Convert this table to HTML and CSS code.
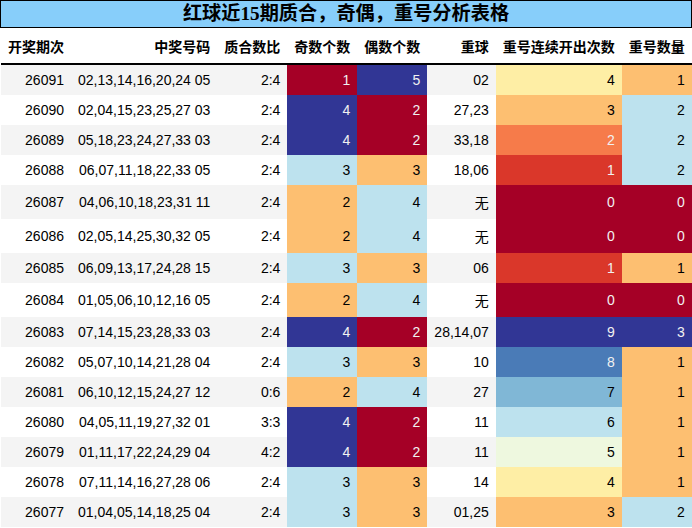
FILE: index.html
```html
<!DOCTYPE html>
<html lang="zh">
<head>
<meta charset="utf-8">
<title>红球近15期质合，奇偶，重号分析表格</title>
<link rel="stylesheet" href="styles.css">
</head>
<body>
<div class="page">
  <div class="title">红球近15期质合，奇偶，重号分析表格</div>
  <table class="grid">
    <thead>
      <tr>
        <th>开奖期次</th><th>中奖号码</th><th>质合数比</th><th>奇数个数</th><th>偶数个数</th><th>重球</th><th>重号连续开出次数</th><th>重号数量</th>
      </tr>
    </thead>
    <tbody>
      <tr><td>26091</td><td>02,13,14,16,20,24 05</td><td>2:4</td><td class="s0">1</td><td class="s9">5</td><td>02</td><td class="s4">4</td><td class="s3">1</td></tr>
      <tr><td>26090</td><td>02,04,15,23,25,27 03</td><td>2:4</td><td class="s9">4</td><td class="s0">2</td><td>27,23</td><td class="s3">3</td><td class="s6">2</td></tr>
      <tr><td>26089</td><td>05,18,23,24,27,33 03</td><td>2:4</td><td class="s9">4</td><td class="s0">2</td><td>33,18</td><td class="s2">2</td><td class="s6">2</td></tr>
      <tr><td>26088</td><td>06,07,11,18,22,33 05</td><td>2:4</td><td class="s6">3</td><td class="s3">3</td><td>18,06</td><td class="s1">1</td><td class="s6">2</td></tr>
      <tr><td>26087</td><td>04,06,10,18,23,31 11</td><td>2:4</td><td class="s3">2</td><td class="s6">4</td><td>无</td><td class="s0">0</td><td class="s0">0</td></tr>
      <tr><td>26086</td><td>02,05,14,25,30,32 05</td><td>2:4</td><td class="s3">2</td><td class="s6">4</td><td>无</td><td class="s0">0</td><td class="s0">0</td></tr>
      <tr><td>26085</td><td>06,09,13,17,24,28 15</td><td>2:4</td><td class="s6">3</td><td class="s3">3</td><td>06</td><td class="s1">1</td><td class="s3">1</td></tr>
      <tr><td>26084</td><td>01,05,06,10,12,16 05</td><td>2:4</td><td class="s3">2</td><td class="s6">4</td><td>无</td><td class="s0">0</td><td class="s0">0</td></tr>
      <tr><td>26083</td><td>07,14,15,23,28,33 03</td><td>2:4</td><td class="s9">4</td><td class="s0">2</td><td>28,14,07</td><td class="s9">9</td><td class="s9">3</td></tr>
      <tr><td>26082</td><td>05,07,10,14,21,28 04</td><td>2:4</td><td class="s6">3</td><td class="s3">3</td><td>10</td><td class="s8">8</td><td class="s3">1</td></tr>
      <tr><td>26081</td><td>06,10,12,15,24,27 12</td><td>0:6</td><td class="s3">2</td><td class="s6">4</td><td>27</td><td class="s7">7</td><td class="s3">1</td></tr>
      <tr><td>26080</td><td>04,05,11,19,27,32 01</td><td>3:3</td><td class="s9">4</td><td class="s0">2</td><td>11</td><td class="s6">6</td><td class="s3">1</td></tr>
      <tr><td>26079</td><td>01,11,17,22,24,29 04</td><td>4:2</td><td class="s9">4</td><td class="s0">2</td><td>11</td><td class="s5">5</td><td class="s3">1</td></tr>
      <tr><td>26078</td><td>07,11,14,16,27,28 06</td><td>2:4</td><td class="s6">3</td><td class="s3">3</td><td>14</td><td class="s4">4</td><td class="s3">1</td></tr>
      <tr><td>26077</td><td>01,04,05,14,18,25 04</td><td>2:4</td><td class="s6">3</td><td class="s3">3</td><td>01,25</td><td class="s3">3</td><td class="s6">2</td></tr>
    </tbody>
  </table>
</div>
</body>
</html>
```
FILE: styles.css
```css
html, body {
  margin: 0;
  padding: 0;
  background: #ffffff;
}

.page {
  width: 692px;
}

.title {
  box-sizing: border-box;
  height: 28px;
  border: 1px solid #000000;
  background: #87cefa;
  font-family: "Liberation Serif", "Noto Sans CJK SC", serif;
  font-weight: bold;
  font-size: 19.2px;
  line-height: 26px;
  text-align: center;
  color: #000000;
}

.grid {
  border-collapse: collapse;
  border-spacing: 0;
  margin-left: 1px;
  font-family: "Liberation Sans", "Noto Sans CJK SC", sans-serif;
  font-size: 14px;
  color: #000000;
}

.grid th,
.grid td {
  padding: 7px;
  text-align: right;
  white-space: nowrap;
}

.grid th {
  padding-top: 8px;
  font-weight: bold;
  border-bottom: 2px solid #000000;
  background: #ffffff;
}

.grid tbody tr:nth-child(odd) {
  background: #f4f4f4;
}

.grid tbody tr:nth-child(even) {
  background: #ffffff;
}

.s0 { background: #a50026; color: #f1f1f1; }
.s1 { background: #da372a; color: #f1f1f1; }
.s2 { background: #f67b4a; color: #f1f1f1; }
.s3 { background: #fdbf71; color: #000000; }
.s4 { background: #feeea5; color: #000000; }
.s5 { background: #eef8df; color: #000000; }
.s6 { background: #bde2ee; color: #000000; }
.s7 { background: #80b7d6; color: #000000; }
.s8 { background: #4a7bb7; color: #f1f1f1; }
.s9 { background: #313695; color: #f1f1f1; }
```
